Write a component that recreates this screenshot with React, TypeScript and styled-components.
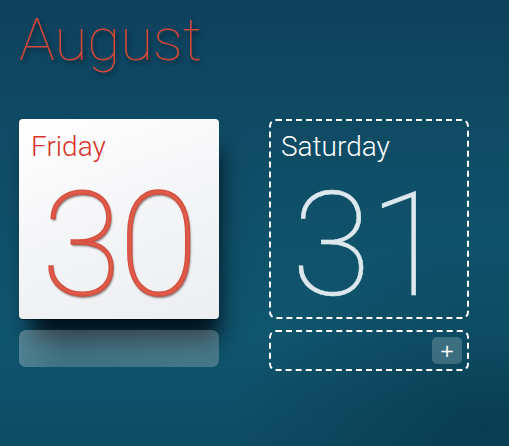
import React from "react";
import styled, { createGlobalStyle } from "styled-components";

const Global = createGlobalStyle`
  html, body { margin: 0; padding: 0; }
  body {
    width: 509px;
    height: 446px;
    overflow: hidden;
    font-family: Roboto, "Liberation Sans", sans-serif;
    background: #0e4a65;
  }
`;

const Page = styled.div`
  width: 509px;
  height: 446px;
  box-sizing: border-box;
  padding: 2px 0 0 19px;
  background:
    radial-gradient(ellipse 70% 60% at 95% 95%, rgba(0, 30, 45, 0.35), transparent 70%),
    linear-gradient(180deg, #0e405c 0%, #0f5068 45%, #10566f 75%, #0d4c63 100%);
  display: flex;
  flex-direction: column;
`;

const Month = styled.h1`
  margin: 0;
  height: 78px;
  font-size: 60px;
  font-weight: 100;
  line-height: 76px;
  color: #d2493a;
  text-shadow: 2px 3px 4px rgba(0, 0, 0, 0.45);
`;

const Row = styled.div`
  margin-top: 39px;
  display: flex;
  gap: 50px;
`;

const Column = styled.div`
  width: 200px;
  display: flex;
  flex-direction: column;
  gap: 11px;
`;

const Card = styled.div<{ $active?: boolean }>`
  box-sizing: border-box;
  width: 200px;
  height: 200px;
  border-radius: ${(p) => (p.$active ? "4px" : "7px")};
  padding: ${(p) => (p.$active ? "12px" : "10px")};
  display: flex;
  flex-direction: column;
  ${(p) =>
    p.$active
      ? `
    background: linear-gradient(160deg, #ffffff 0%, #f4f5f7 50%, #eceef1 100%);
    box-shadow: 0 1px 1px rgba(0,0,0,0.4), 6px 26px 22px -6px rgba(0, 10, 18, 0.9);
  `
      : `
    border: 2px dashed #ffffff;
  `}
`;

const DayName = styled.div<{ $active?: boolean }>`
  font-size: 28px;
  font-weight: 300;
  line-height: 32px;
  color: ${(p) => (p.$active ? "#d8332a" : "#ffffff")};
`;

const DayNumber = styled.div<{ $active?: boolean }>`
  height: 110px;
  margin-top: 27px;
  text-align: center;
  font-size: 145px;
  font-weight: 100;
  line-height: 110px;
  letter-spacing: -2px;
  color: ${(p) => (p.$active ? "#e05a4a" : "#dce8ee")};
  text-shadow: ${(p) =>
    p.$active ? "1px 2px 2px rgba(40, 20, 20, 0.55)" : "none"};
  -webkit-text-stroke: ${(p) => (p.$active ? "1.4px #d4503f" : "0.6px #dce8ee")};
`;

const Tray = styled.div<{ $active?: boolean }>`
  box-sizing: border-box;
  width: 200px;
  height: ${(p) => (p.$active ? "37px" : "41px")};
  border-radius: 7px;
  display: flex;
  align-items: center;
  justify-content: flex-end;
  padding-right: 5px;
  ${(p) =>
    p.$active
      ? `
    background: linear-gradient(100deg, rgba(230,240,240,0.3) 0%, rgba(200,200,200,0.26) 25%, rgba(210,215,215,0.28) 100%);
  `
      : `
    border: 2px dashed #ffffff;
  `}
`;

const AddButton = styled.button`
  width: 30px;
  height: 27px;
  border: none;
  border-radius: 5px;
  background: rgba(255, 255, 255, 0.2);
  color: #ffffff;
  font-family: "DejaVu Sans", sans-serif;
  font-size: 18px;
  line-height: 27px;
  padding: 0;
  display: flex;
  align-items: center;
  justify-content: center;
`;

export default function App() {
  return (
    <>
      <Global />
      <Page>
        <Month>August</Month>
        <Row>
          <Column>
            <Card $active>
              <DayName $active>Friday</DayName>
              <DayNumber $active>30</DayNumber>
            </Card>
            <Tray $active />
          </Column>
          <Column>
            <Card>
              <DayName>Saturday</DayName>
              <DayNumber>31</DayNumber>
            </Card>
            <Tray>
              <AddButton>+</AddButton>
            </Tray>
          </Column>
        </Row>
      </Page>
    </>
  );
}
